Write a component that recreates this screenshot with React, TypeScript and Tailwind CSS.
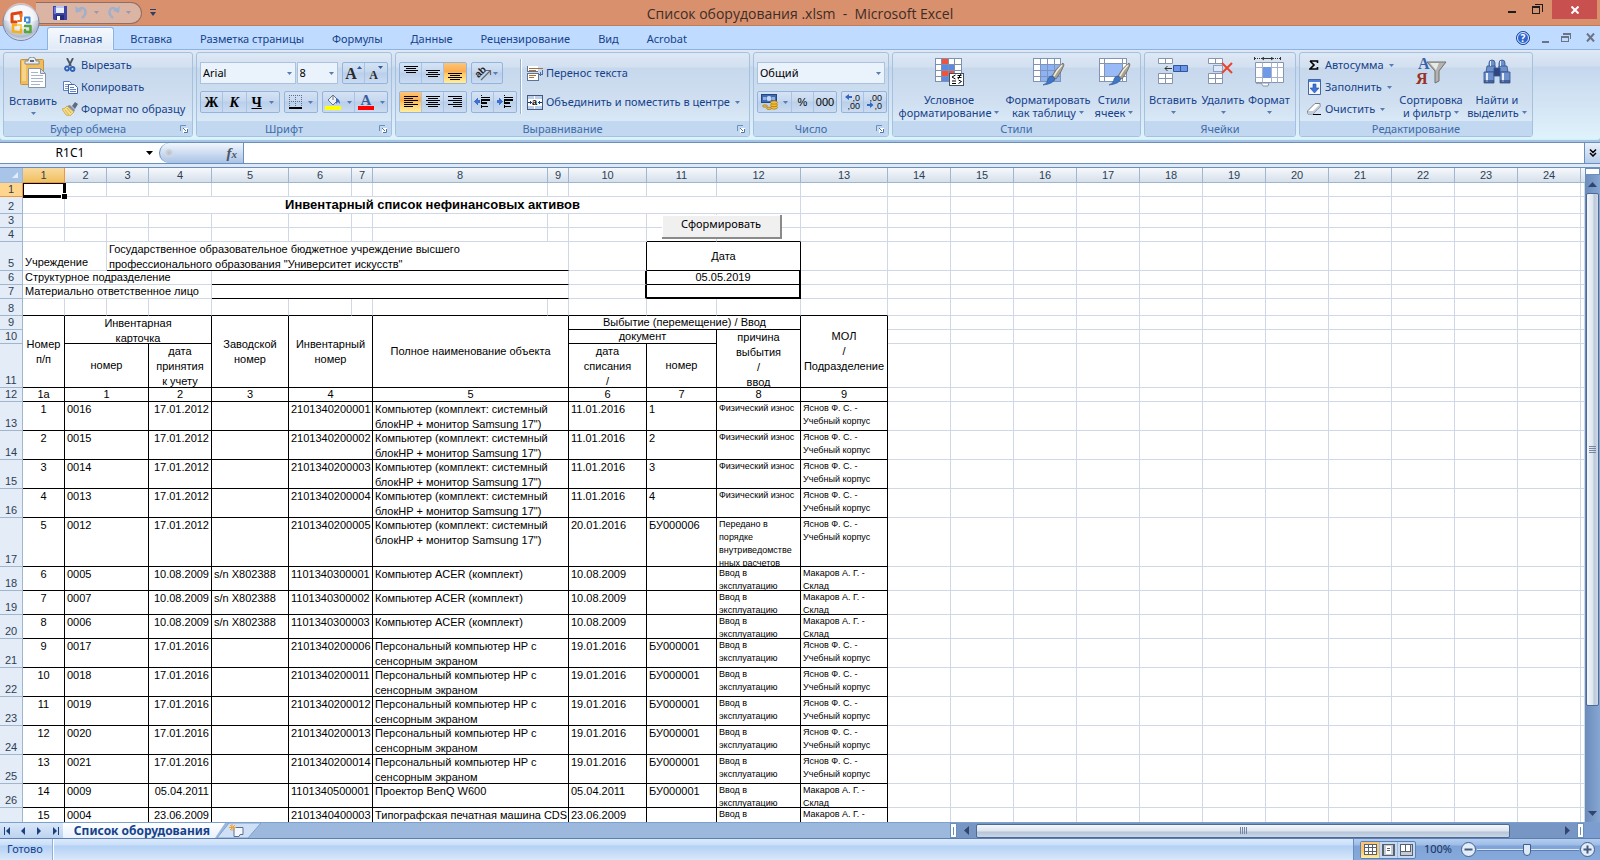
import React from 'react';
import clsx from 'clsx';

interface Asset {
  row: number;
  height: number;
  cells: string[];
}

const MONO_NAME = 'Компьютер (комплект: системный\nблокHP + монитор Samsung 17")';
const TOUCH_NAME = 'Персональный компьютер HP с\nсенсорным экраном';
const STUDY = 'Яснов Ф. С. -\nУчебный корпус';
const STORE = 'Макаров А. Г. -\nСклад';
const LAUNCH = 'Ввод в\nэксплуатацию';
const WEAR = 'Физический износ';
const MOVED = 'Передано в\nпорядке\nвнутриведомстве\nнных расчетов';

const assets: Asset[] = [
  { row: 13, height: 29, cells: ['1', '0016', '17.01.2012', '', '2101340200001', MONO_NAME, '11.01.2016', '1', WEAR, STUDY] },
  { row: 14, height: 29, cells: ['2', '0015', '17.01.2012', '', '2101340200002', MONO_NAME, '11.01.2016', '2', WEAR, STUDY] },
  { row: 15, height: 29, cells: ['3', '0014', '17.01.2012', '', '2101340200003', MONO_NAME, '11.01.2016', '3', WEAR, STUDY] },
  { row: 16, height: 29, cells: ['4', '0013', '17.01.2012', '', '2101340200004', MONO_NAME, '11.01.2016', '4', WEAR, STUDY] },
  { row: 17, height: 49, cells: ['5', '0012', '17.01.2012', '', '2101340200005', MONO_NAME, '20.01.2016', 'БУ000006', MOVED, STUDY] },
  { row: 18, height: 24, cells: ['6', '0005', '10.08.2009', 's/n X802388', '1101340300001', 'Компьютер ACER (комплект)', '10.08.2009', '', LAUNCH, STORE] },
  { row: 19, height: 24, cells: ['7', '0007', '10.08.2009', 's/n X802388', '1101340300002', 'Компьютер ACER (комплект)', '10.08.2009', '', LAUNCH, STORE] },
  { row: 20, height: 24, cells: ['8', '0006', '10.08.2009', 's/n X802388', '1101340300003', 'Компьютер ACER (комплект)', '10.08.2009', '', LAUNCH, STORE] },
  { row: 21, height: 29, cells: ['9', '0017', '17.01.2016', '', '2101340200006', TOUCH_NAME, '19.01.2016', 'БУ000001', LAUNCH, STUDY] },
  { row: 22, height: 29, cells: ['10', '0018', '17.01.2016', '', '2101340200011', TOUCH_NAME, '19.01.2016', 'БУ000001', LAUNCH, STUDY] },
  { row: 23, height: 29, cells: ['11', '0019', '17.01.2016', '', '2101340200012', TOUCH_NAME, '19.01.2016', 'БУ000001', LAUNCH, STUDY] },
  { row: 24, height: 29, cells: ['12', '0020', '17.01.2016', '', '2101340200013', TOUCH_NAME, '19.01.2016', 'БУ000001', LAUNCH, STUDY] },
  { row: 25, height: 29, cells: ['13', '0021', '17.01.2016', '', '2101340200014', TOUCH_NAME, '19.01.2016', 'БУ000001', LAUNCH, STUDY] },
  { row: 26, height: 24, cells: ['14', '0009', '05.04.2011', '', '1101340500001', 'Проектор BenQ W600', '05.04.2011', 'БУ000001', LAUNCH, STORE] },
  { row: 27, height: 34, cells: ['15', '0004', '23.06.2009', '', '2101340400003', 'Типографская печатная машина CDS', '23.06.2009', '', 'Ввод в', 'Макаров А. Г. -'] },
];

const columnWidths = [42, 42, 42, 63, 77, 63, 21, 175, 21, 78, 70, 84, 87, 63, 63, 63, 63, 63, 63, 63, 63, 63, 63, 63];

/* ---------- small shared pieces ---------- */

const Arrow = ({ className = '' }: { className?: string }) => (
  <svg className={clsx('h-[3px] w-[5px] shrink-0', className)} viewBox="0 0 5 3" aria-hidden="true">
    <path d="M0 0h5L2.500 3z" fill="#567db1" />
  </svg>
);

const LauncherIcon = () => (
  <svg width="8" height="8" viewBox="0 0 8 8" fill="none" aria-hidden="true">
    <path d="M0.500 6V0.500H6" stroke="#6d8fbe" />
    <path d="M3 3h5v5H3z" fill="#fff" />
    <path d="M3 3l3 3M7.500 4v3.500H4" stroke="#4f74a8" />
  </svg>
);

const Group: React.FC<{ title: string; width: string; launcher?: boolean; children: React.ReactNode }> = ({
  title,
  width,
  launcher,
  children,
}) => (
  <section
    className={clsx(
      'flex h-[85px] shrink-0 flex-col overflow-hidden rounded-[3px] border border-[#a5c1de] bg-[linear-gradient(#dee8f5,#d3e0f0_14px,#c7d8ed_15px,#d0e0f1_50px,#dae9f6_68px)]',
      width,
    )}
  >
    <div className="flex h-[68px] shrink-0">{children}</div>
    <div className={clsx('flex flex-1 items-center bg-[#c1d8f0]', launcher && 'pr-1')}>
      <h2 className={clsx('flex-1 text-center text-[11px] leading-[14px] text-[#3e6aaa]', launcher && 'pr-2')}>{title}</h2>
      {launcher && (
        <button aria-label={`${title}: параметры`}>
          <LauncherIcon />
        </button>
      )}
    </div>
  </section>
);

const ButtonStrip = ({ children }: { children: React.ReactNode }) => (
  <div className="flex h-[22px] overflow-hidden rounded-[2px] border border-[#93b4dc] bg-[linear-gradient(#d5e3f4,#c6d7ee_9px,#bacfeb_10px,#cbdcf1)]">
    {children}
  </div>
);

const StripButton: React.FC<{ label: string; width?: string; active?: boolean; last?: boolean; children: React.ReactNode }> = ({
  label,
  width = 'w-[22px]',
  active,
  last,
  children,
}) => (
  <button
    aria-label={label}
    className={clsx(
      'flex items-center justify-center gap-[5px]',
      width,
      !last && 'border-r border-[#a9c3e4]',
      active && 'bg-[linear-gradient(#fbc578,#fdab4b_9px,#fdc562_10px,#ffee9c)]',
    )}
  >
    {children}
  </button>
);

const SmallButton: React.FC<{ label: string; icon: React.ReactNode; arrow?: boolean }> = ({ label, icon, arrow }) => (
  <button className="flex h-[22px] items-center gap-[3px] whitespace-nowrap">
    <span className="flex w-4 justify-center">{icon}</span>
    <span>{label}</span>
    {arrow && <Arrow className="ml-[2px]" />}
  </button>
);

const BigButton: React.FC<{ lines: string[]; icon: React.ReactNode; width: string }> = ({ lines, icon, width }) => (
  <button className={clsx('flex shrink-0 flex-col items-center pt-1 leading-[13px] whitespace-nowrap', width)}>
    {icon}
    <span className="mt-[6px]">{lines[0]}</span>
    {lines[1] ? (
      <span className="flex items-center gap-[3px]">
        {lines[1]}
        <Arrow />
      </span>
    ) : (
      <Arrow className="mt-[5px]" />
    )}
  </button>
);

/* ---------- icons ---------- */

const OfficeOrb = () => (
  <svg width="40" height="40" viewBox="0 0 40 40" aria-hidden="true">
    <defs>
      <radialGradient id="orb" cx="50%" cy="35%" r="68%">
        <stop offset="0" stopColor="#ffffff" />
        <stop offset="0.5" stopColor="#e9ecf2" />
        <stop offset="0.8" stopColor="#aebace" />
        <stop offset="1" stopColor="#eef4fb" />
      </radialGradient>
    </defs>
    <circle cx="20" cy="20.500" r="18" fill="url(#orb)" stroke="#7485a4" />
    <path d="M3 18a17 17 0 0 1 34 0q-17 6-34 0z" fill="#fff" opacity="0.45" />
    <g fill="none" strokeLinejoin="round" strokeLinecap="round">
      <path d="M15 20h-4v-8l9-1.500V14" stroke="#dd4410" strokeWidth="3" />
      <path d="M20 12v7h-3" stroke="#f0741f" strokeWidth="2" />
      <path d="M24 17v-1.500h4.500v5H24z" stroke="#3c8ad8" strokeWidth="2" />
      <path d="M15 23h-3v6.500l8 1v-3" stroke="#f7b01c" strokeWidth="2.600" />
      <path d="M17 23h3v3" stroke="#f9cf55" strokeWidth="2" />
      <path d="M24 24h5.500v6H24v-2" stroke="#58a53a" strokeWidth="2.500" />
    </g>
    <path d="M21 18h2v2h2v2h-2v2h-2v-2h-2v-2h2z" fill="#fff" />
  </svg>
);

const SaveIcon = () => (
  <svg width="14" height="14" viewBox="0 0 14 14" aria-hidden="true">
    <path d="M0 0h14v14H1L0 13z" fill="#3b45a8" />
    <path d="M1 1h2v7H1z" fill="#6b78d8" />
    <path d="M3 0h8v7H3z" fill="#e9eefb" />
    <path d="M3 0h8v2H3z" fill="#b9c6ee" />
    <path d="M3 9h8v5H3z" fill="#262d78" />
    <path d="M4 10h3v4H4z" fill="#fff" />
  </svg>
);

const UndoIcon = ({ flip }: { flip?: boolean }) => (
  <svg width="13" height="13" viewBox="0 0 13 13" className={flip ? '-scale-x-100' : ''} aria-hidden="true">
    <path d="M0 0l1 7 6-2z" fill="#9fb0cd" />
    <path d="M3 4q5-4 7 0 2 4-3 8" fill="none" stroke="#9fb0cd" strokeWidth="2.500" />
  </svg>
);

const PasteIcon = () => (
  <svg width="27" height="31" viewBox="0 0 27 31" aria-hidden="true">
    <rect x="0.500" y="2.500" width="23" height="25" rx="1" fill="#eebd5e" stroke="#c9923a" />
    <path d="M2 24V4h4v20z" fill="#f7d489" />
    <path d="M5 7V4h3q0-4 4-4t4 4h3v3z" fill="#e9edf2" stroke="#6e7a8b" strokeWidth="0.800" />
    <path d="M10 3h4v2h-4z" fill="#5d6878" />
    <path d="M8.500 11.500h12l5 5v14h-17z" fill="#fff" stroke="#8793a7" />
    <path d="M20.500 11.500v5h5z" fill="#d5dded" stroke="#8793a7" />
    <path d="M11 15.500h7M11 18.500h12M11 21.500h12M11 24.500h12M11 27.500h9" stroke="#a6b4ca" />
  </svg>
);

const CutIcon = () => (
  <svg width="12" height="14" viewBox="0 0 12 14" fill="none" aria-hidden="true">
    <path d="M3 0l4 8M9 0L5 8" stroke="#4c5566" strokeWidth="1.800" />
    <circle cx="3" cy="10.500" r="2" stroke="#2f62b4" strokeWidth="1.800" />
    <circle cx="8.500" cy="11" r="2" stroke="#2f62b4" strokeWidth="1.800" />
  </svg>
);

const CopyIcon = () => (
  <svg width="15" height="13" viewBox="0 0 15 13" aria-hidden="true">
    <path d="M0.500 0.500h6l2 2v7h-8z" fill="#fff" stroke="#5a7dbd" />
    <path d="M2 3.500h4M2 5.500h4M2 7.500h3" stroke="#7d9ad0" />
    <path d="M5.500 3.500h6l3 3v6h-9z" fill="#fff" stroke="#3f65ae" />
    <path d="M7 6.500h4M7 8.500h6M7 10.500h6" stroke="#5f83c6" />
  </svg>
);

const BrushIcon = () => (
  <svg width="16" height="14" viewBox="0 0 16 14" aria-hidden="true">
    <path d="M10 4l3-4 3 2-3 5z" fill="#5f6b80" />
    <path d="M5 4l3-1 5 5-1 2z" fill="#8492a8" />
    <path d="M5 4l7 6-4 4-4-1-4-6q3 0 5-3z" fill="#f4dc87" stroke="#c09c3b" strokeWidth="0.700" />
    <path d="M3 8l4 5M5 6l4 5" stroke="#cfa94a" strokeWidth="0.800" />
  </svg>
);

const Lines = ({ y, widths, align }: { y: number; widths: number[]; align: 'left' | 'center' | 'right' }) => (
  <svg width="14" height="16" viewBox="0 0 14 16" shapeRendering="crispEdges" aria-hidden="true">
    {widths.map((w, i) => (
      <rect
        key={i}
        x={align === 'left' ? 0 : align === 'center' ? (14 - w) / 2 : 14 - w}
        y={y + i * 2}
        width={w}
        height="1"
        fill="#000"
      />
    ))}
  </svg>
);

const IndentIcon = ({ flip }: { flip?: boolean }) => (
  <svg width="17" height="14" viewBox="0 0 17 14" shapeRendering="crispEdges" aria-hidden="true">
    <path d={flip ? 'M0 5h2V3l4 3.500L2 10V8H0z' : 'M6 5H4V3L0 6.500 4 10V8h2z'} fill="#3f6fd0" />
    <path d="M7 2h9v1H7zM7 4h9v2H7zM7 7h6v2H7zM7 11h7v1H7z" fill="#000" />
    <path d="M7.500 0v14" stroke="#000" strokeDasharray="1 1" />
  </svg>
);

const OrientationIcon = () => (
  <svg width="16" height="15" viewBox="0 0 16 15" className="overflow-visible" aria-hidden="true">
    <g transform="rotate(-45 6 6)">
      <text x="-1" y="8" fontSize="10" fontWeight="bold" fontFamily="Liberation Sans, sans-serif" fill="#222">ab</text>
    </g>
    <path d="M5 14l9-9M14.500 9V4.500H10" fill="none" stroke="#666" strokeWidth="1.200" />
  </svg>
);

const WrapIcon = () => (
  <svg width="16" height="15" viewBox="0 0 16 15" shapeRendering="crispEdges" aria-hidden="true">
    <path d="M0 0h11v5H0zM0 8h11v6H0z" fill="#fff" />
    <path d="M0.500 0v5.500H11M0.500 7.500v7h11v-7z" fill="none" stroke="#5e7292" />
    <path d="M2 2.500h14M2 4.500h7M2 9.500h7M2 11.500h5" stroke="#a8703a" />
    <path d="M15 4v4h-3M13 6v4" stroke="#4a6ca8" fill="none" />
  </svg>
);

const MergeIcon = () => (
  <svg width="16" height="15" viewBox="0 0 16 15" shapeRendering="crispEdges" aria-hidden="true">
    <rect x="0.500" y="0.500" width="15" height="14" fill="#bcd0ee" stroke="#44597c" />
    <path d="M1 4.500h14M1 10.500h14M7.500 1v3M7.500 11v3" stroke="#fff" />
    <path d="M1 5h14v5H1z" fill="#fff" />
    <path d="M1 7h4v1H1zM3 6h1v3H3zM11 7h4v1h-4zM12 6h1v3h-1z" fill="#1d3b77" />
    <text x="5" y="10" fontSize="9" fontWeight="bold" fontFamily="Liberation Sans, sans-serif">a</text>
  </svg>
);

const BorderIcon = () => (
  <svg width="14" height="14" viewBox="0 0 14 14" shapeRendering="crispEdges" aria-hidden="true">
    <path d="M0 0.500h13M0 6.500h13M0.500 0v12M6.500 0v12M12.500 0v12" stroke="#5c6f8c" strokeDasharray="1 1" />
    <path d="M0 13h13" stroke="#000" strokeWidth="2" />
  </svg>
);

const FillIcon = () => (
  <svg width="17" height="16" viewBox="0 0 17 16" aria-hidden="true">
    <path d="M3 6l5-5 5 5-5 5z" fill="#eef3fa" stroke="#66748b" />
    <path d="M8 1v5" stroke="#66748b" />
    <path d="M11 4q4 1 4 6l-2-2-2 2z" fill="#3f6db9" />
    <path d="M0 12h16v4H0z" fill="#ffff00" />
  </svg>
);

const FontColorIcon = () => (
  <svg width="17" height="16" viewBox="0 0 17 16" className="overflow-visible" aria-hidden="true">
    <text x="8" y="11" textAnchor="middle" fontSize="15" fontWeight="bold" fontFamily="Liberation Serif, serif" fill="#3c5c9a">A</text>
    <path d="M0 12h16v4H0z" fill="#ff0000" />
  </svg>
);

const CurrencyIcon = () => (
  <svg width="17" height="16" viewBox="0 0 17 16" aria-hidden="true">
    <rect x="0.500" y="0.500" width="15" height="8" fill="#3e6cb8" stroke="#27467f" />
    <circle cx="8" cy="4.500" r="2.500" fill="#c7d8f2" />
    <path d="M2 3h3v3H2zM11 3h3v3h-3z" fill="#8fafe0" />
    <g fill="#f4bd33" stroke="#9c6b0c" strokeWidth="0.600">
      <ellipse cx="13" cy="13.500" rx="3.500" ry="1.700" />
      <ellipse cx="13" cy="11" rx="3.500" ry="1.700" />
      <ellipse cx="13" cy="8.500" rx="3.500" ry="1.700" />
      <ellipse cx="4" cy="12" rx="2.500" ry="1.200" />
      <ellipse cx="8" cy="14.300" rx="2.500" ry="1.200" />
    </g>
  </svg>
);

const DecimalIcon = ({ less }: { less?: boolean }) => (
  <svg width="16" height="16" viewBox="0 0 16 16" fontFamily="Liberation Sans, sans-serif" fontSize="9" fill="#111" className="overflow-visible" aria-hidden="true">
    <text x="15" y="7" textAnchor="end">{less ? ',00' : ',0'}</text>
    <text x="15" y="15" textAnchor="end">{less ? ',0' : ',00'}</text>
    <path d={less ? 'M0 10h3V8l3.500 3L3 14v-2H0z' : 'M7 2H4V0L0 3l4 3V4h3z'} fill="#3567c0" />
  </svg>
);

const CondFormatIcon = () => (
  <svg width="31" height="30" viewBox="0 0 31 30" shapeRendering="crispEdges" aria-hidden="true">
    <path d="M1 1h27v24H1z" fill="#fff" />
    <path d="M8 1h6v6H8zM8 13h12v6H8z" fill="#f0523c" />
    <path d="M8 7h12v6H8zM8 19h6v6H8z" fill="#5b8ae6" />
    <path d="M1.500 1v24M7.500 1v24M14.500 1v24M20.500 1v24M27.500 1v24M1 1.500h27M1 7.500h27M1 13.500h27M1 19.500h27M1 24.500h27" stroke="#7f8fae" />
    <path d="M15.500 16.500h14v12h-14z" fill="#fff" stroke="#445068" />
    <g stroke="#000" fill="none" shapeRendering="auto">
      <path d="M21.500 18l-3.500 2 3.500 2M18 24h4M18 26.500h4M23.500 18.500h4M23.500 20.500h4M27 17l-3 5M24.500 23l3 1.500-3 2" />
    </g>
  </svg>
);

const Brush = () => (
  <>
    <path d="M31 6q-7 5-11 13l4 3q6-8 8-14z" fill="#a9a393" stroke="#5f5b50" strokeWidth="0.700" />
    <path d="M30 8q-5 5-8 11" stroke="#f2efe6" strokeWidth="1.500" fill="none" />
    <path d="M20 19l3 3q-2 5-12 6 5-2 5-6 1-3 4-3z" fill="#3f77c8" stroke="#27508f" strokeWidth="0.600" />
  </>
);

const TableFormatIcon = () => (
  <svg width="33" height="30" viewBox="0 0 33 30" aria-hidden="true">
    <path d="M1 1h28v24H1z" fill="#fff" />
    <path d="M8 7h21v18H8z" fill="#8db3f5" />
    <path d="M1.500 1v24M8.500 1v24M15.500 1v24M22.500 1v24M28.500 1v24M1 1.500h28M1 7.500h28M1 13.500h28M1 19.500h28M1 24.500h28" stroke="#7f93b8" />
    <Brush />
  </svg>
);

const CellStylesIcon = () => (
  <svg width="33" height="30" viewBox="0 0 33 30" aria-hidden="true">
    <path d="M1 1h28v24H1z" fill="#fff" />
    <path d="M6.500 6.500h18v13h-18z" fill="#98bbf8" />
    <path d="M1.500 1v24M6.500 1v24M24.500 1v24M28.500 1v24M1 1.500h28M1 6.500h28M1 19.500h28M1 24.500h28" stroke="#8394b2" fill="none" />
    <Brush />
  </svg>
);

const InsertCellsIcon = ({ remove }: { remove?: boolean }) => (
  <svg width="31" height="30" viewBox="0 0 31 30" aria-hidden="true">
    <g fill="#fff" stroke="#8794ae">
      <path d="M0.500 1.500h14v5h-14zM7.500 1.500v5M0.500 16.500h14v10h-14zM7.500 16.500v10M0.500 21.500h14" />
    </g>
    {remove ? (
      <>
        <path d="M5.500 8.500h9v6h-9z" fill="#dfe9f8" stroke="#3c5f9c" strokeDasharray="1 1" />
        <path d="M14 6l10 10M24 6L14 16" stroke="#e8452c" strokeWidth="2" />
      </>
    ) : (
      <>
        <path d="M15.500 8.500h14v6h-14z" fill="#6c97e8" stroke="#2f559d" />
        <path d="M22.500 8.500v6" stroke="#2f559d" />
        <path d="M14 11.500H7M9.500 9L7 11.500 9.500 14" stroke="#333" fill="none" />
      </>
    )}
  </svg>
);

const FormatCellsIcon = () => (
  <svg width="31" height="30" viewBox="0 0 31 30" aria-hidden="true">
    <path d="M1 1.500h25" stroke="#333" strokeDasharray="1 1" />
    <path d="M8 1.500h11M10 0L8 1.500 10 3M17 0l2 1.500L17 3M0.500 0v3M26.500 0v3" stroke="#333" fill="none" />
    <path d="M1.500 5.500h28v20h-28z" fill="#fff" stroke="#8794ae" />
    <path d="M8.500 5.500v20M17.500 5.500v20M23.500 5.500v20M1.500 10.500h28M1.500 20.500h28" stroke="#a8b3c8" />
    <path d="M9 10h8v11H9z" fill="#6f9ae8" />
    <path d="M2 26h5l2 3h5l1-3z" fill="#fff" stroke="#8794ae" />
  </svg>
);

const SortFilterIcon = () => (
  <svg width="31" height="30" viewBox="0 0 31 30" fontFamily="Liberation Serif, serif" fontWeight="bold" fontSize="16" className="overflow-visible" aria-hidden="true">
    <path d="M11 5h19l-7 9v10l-4 2V14z" fill="#b3b3b0" stroke="#70706d" />
    <path d="M14 6h9l-3 7z" fill="#e9e9e6" />
    <text x="2" y="12" fill="#3a62ae">А</text>
    <text x="0" y="27" fill="#9a3226">Я</text>
  </svg>
);

const BinocularsIcon = () => (
  <svg width="28" height="30" viewBox="0 0 28 30" aria-hidden="true">
    <g fill="#6d8fca" stroke="#34528e" strokeWidth="0.800">
      <path d="M6 6q0-3 3-3t3 3v6H6zM16 6q0-3 3-3t3 3v6h-6z" />
      <path d="M4 9h8v6H3zM16 9h8l1 6h-9z" />
      <path d="M1 15h10v11H1zM17 15h10v11H17z" />
      <path d="M11 11h6v8h-6z" fill="#2d4680" />
    </g>
    <path d="M3 16h2v9H3zM19 16h2v9h-2zM7 4h1v5H7zM17 4h1v5h-1z" fill="#e3edfb" />
    <path d="M1 23h10v3H1zM17 23h10v3H17z" fill="#2b4379" opacity="0.6" />
  </svg>
);

const SumIcon = () => (
  <svg width="10" height="10" viewBox="0 0 10 10" aria-hidden="true">
    <path d="M1 1h7.500v2M1 1l4 4-4 4h7.500V7" fill="none" stroke="#000" strokeWidth="1.600" />
  </svg>
);

const FillDownIcon = () => (
  <svg width="13" height="16" viewBox="0 0 13 16" aria-hidden="true">
    <path d="M0.500 0.500h12v15h-12z" fill="#f3f7fd" stroke="#45659c" />
    <path d="M1 1h11v2H1z" fill="#4c83dc" />
    <path d="M5 5h3v4h3l-4.500 5L2 9h3z" fill="#3c75d8" stroke="#234f9e" strokeWidth="0.600" />
  </svg>
);

const EraserIcon = () => (
  <svg width="14" height="12" viewBox="0 0 14 12" aria-hidden="true">
    <path d="M0.500 8L8 0.500h5V4L6 11H1z" fill="#fff" stroke="#74808f" />
    <path d="M1 8h5l7-7v3L6 11H1z" fill="#c3cad4" />
    <path d="M6 11.500h8" stroke="#000" />
  </svg>
);

const Digits = ({ children }: { children: string }) => (
  <span className="font-['Liberation_Sans',Arial,sans-serif] text-[11px] text-black">{children}</span>
);

/* ---------- window frame ---------- */

const TitleBar = () => (
  <header className="flex h-[26px] shrink-0 items-stretch border-b border-[#bf7c5b] bg-[#d8906d]">
    <div className="flex flex-1 items-center">
      <div className="ml-9 flex h-[22px] w-[106px] items-center rounded-r-full border border-l-0 border-[#8d6f68] bg-[#dbb4a3] pl-[17px]">
        <button aria-label="Сохранить"><SaveIcon /></button>
        <button aria-label="Отменить" className="ml-2 flex items-center gap-[6px]"><UndoIcon /><Arrow className="opacity-50" /></button>
        <button aria-label="Вернуть" className="ml-2 flex items-center gap-[6px]"><UndoIcon flip /><Arrow className="opacity-50" /></button>
      </div>
      <button aria-label="Настройка панели быстрого доступа" className="ml-2">
        <svg width="6" height="7" viewBox="0 0 6 7"><path d="M0 0h6v1H0zM0 3h6L3 7z" fill="#2b3f6b" /></svg>
      </button>
    </div>
    <h1 className="font-['Open_Sans','Noto_Sans',sans-serif] text-[14px] leading-[27px] text-[#3c2d28]">
      Список оборудования .xlsm&nbsp; -&nbsp; Microsoft Excel
    </h1>
    <div className="flex flex-1 items-start justify-end gap-[16px]">
      <button aria-label="Свернуть" className="pt-[11px]">
        <svg width="8" height="2" viewBox="0 0 8 2"><path d="M0 0h8v2H0z" fill="#1d1d1d" /></svg>
      </button>
      <button aria-label="Восстановить" className="pt-1">
        <svg width="11" height="10" viewBox="0 0 11 10" shapeRendering="crispEdges">
          <path d="M3 0.500h7.500V8M0.500 3v6.500h7V3" fill="none" stroke="#1d1d1d" />
          <path d="M0 2h8v2H0z" fill="#1d1d1d" />
        </svg>
      </button>
      <button aria-label="Закрыть" className="mr-[3px] -ml-[7px] flex h-[19px] w-[45px] items-center justify-center bg-[#c8504f]">
        <svg width="8" height="8" viewBox="0 0 8 8"><path d="M0.500 0.500l7 7M7.500 0.500l-7 7" stroke="#fff" strokeWidth="2" /></svg>
      </button>
    </div>
  </header>
);

const tabs = ['Главная', 'Вставка', 'Разметка страницы', 'Формулы', 'Данные', 'Рецензирование', 'Вид', 'Acrobat'];

const TabBar = () => (
  <nav className="flex h-6 shrink-0 items-end border-b border-[#8db2e3] bg-[#bfdbff] pl-[47px]">
    {tabs.map((tab, i) => (
      <button
        key={tab}
        className={clsx(
          'text-[11px] leading-[22px] whitespace-nowrap',
          i === 0
            ? 'mr-[2px] -mb-px h-[23px] rounded-t-[3px] border border-b-0 border-[#8db2e3] bg-[linear-gradient(#f5f9fe,#dfeaf7)] px-[11px] shadow-[inset_0_0_2px_#fff]'
            : 'h-[22px] px-[14px] pt-px',
        )}
      >
        {tab}
      </button>
    ))}
    <div className="flex flex-1 items-center justify-end gap-[12px] self-center pr-[5px]">
      <button aria-label="Справка">
        <svg width="14" height="14" viewBox="0 0 14 14">
          <circle cx="7" cy="7" r="6.500" fill="#2f66d0" stroke="#1f4496" />
          <circle cx="7" cy="7" r="5.500" fill="none" stroke="#dbe8ff" />
          <text x="7" y="11" fontSize="10" fontWeight="bold" textAnchor="middle" fill="#fff">?</text>
        </svg>
      </button>
      <button aria-label="Свернуть книгу" className="pt-2">
        <svg width="7" height="2" viewBox="0 0 7 2"><path d="M0 0h7v2H0z" fill="#6a7485" /></svg>
      </button>
      <button aria-label="Восстановить книгу">
        <svg width="10" height="9" viewBox="0 0 10 9" shapeRendering="crispEdges">
          <path d="M2 1h7v5M0.500 3v5.500h7V3" fill="none" stroke="#6a7485" />
          <path d="M2 0h8v2H2zM0 3h8v2H0z" fill="#6a7485" />
        </svg>
      </button>
      <button aria-label="Закрыть книгу" className="ml-[3px]">
        <svg width="9" height="9" viewBox="0 0 9 9"><path d="M1 0.500l7 8M8 0.500l-7 8" stroke="#6a7485" strokeWidth="2" /></svg>
      </button>
    </div>
  </nav>
);

const RibbonSelect: React.FC<{ label: string; value: string; width: string }> = ({ label, value, width }) => (
  <label className={clsx('relative flex h-[22px] items-center', width)}>
    <select
      aria-label={label}
      defaultValue={value}
      className="h-full w-full appearance-none border border-[#abc1de] bg-[#eaf2fb] pl-[2px] text-[11px] text-black"
    >
      <option>{value}</option>
    </select>
    <Arrow className="pointer-events-none absolute right-1" />
  </label>
);

const Ribbon = () => (
  <div className="shrink-0 border-b border-[#6a8fbd] bg-[#a9c3e5] pb-[2px]">
    <div className="flex h-[90px] gap-[3px] overflow-hidden rounded-b-[3px] border-b border-[#c8f4f8] bg-[linear-gradient(#dfe9f5,#d0def0_16px,#c5d7ed_17px,#e0f2fb)] pt-[2px] pl-[3px] text-[11px]">
      <Group title="Буфер обмена" width="w-[190px]" launcher>
        <BigButton lines={['Вставить']} icon={<PasteIcon />} width="w-[58px]" />
        <div className="flex flex-col items-start pt-[1px]">
          <SmallButton label="Вырезать" icon={<CutIcon />} />
          <SmallButton label="Копировать" icon={<CopyIcon />} />
          <SmallButton label="Формат по образцу" icon={<BrushIcon />} />
        </div>
      </Group>

      <Group title="Шрифт" width="w-[196px]" launcher>
        <div className="flex w-full flex-col gap-[7px] px-[3px] pt-[9px]">
          <div className="flex gap-[1px]">
            <RibbonSelect label="Шрифт" value="Arial" width="w-[97px]" />
            <RibbonSelect label="Размер шрифта" value="8" width="w-[42px]" />
            <div className="ml-[3px] font-['Liberation_Serif',serif] font-bold text-[#2a2a2a]">
              <ButtonStrip>
                <StripButton label="Увеличить размер шрифта">
                  <span className="pt-[2px] text-[16px] leading-none">A</span>
                  <svg width="5" height="3" viewBox="0 0 5 3" className="mb-3 -ml-[5px]"><path d="M0 3h5L2.500 0z" fill="#34589a" /></svg>
                </StripButton>
                <StripButton label="Уменьшить размер шрифта" last>
                  <span className="pt-1 text-[12px] leading-none">A</span>
                  <svg width="5" height="3" viewBox="0 0 5 3" className="mb-3 -ml-[5px]"><path d="M0 0h5L2.500 3z" fill="#34589a" /></svg>
                </StripButton>
              </ButtonStrip>
            </div>
          </div>
          <div className="flex gap-1 font-['Liberation_Serif',serif] text-[14px] font-bold text-black">
            <ButtonStrip>
              <StripButton label="Полужирный">Ж</StripButton>
              <StripButton label="Курсив" width="w-[24px]"><i>К</i></StripButton>
              <StripButton label="Подчеркнутый" width="w-[32px]" last><u>Ч</u><Arrow className="ml-[2px]" /></StripButton>
            </ButtonStrip>
            <ButtonStrip>
              <StripButton label="Границы" width="w-[33px]" last><BorderIcon /><Arrow /></StripButton>
            </ButtonStrip>
            <ButtonStrip>
              <StripButton label="Цвет заливки" width="w-[32px]"><FillIcon /><Arrow /></StripButton>
              <StripButton label="Цвет текста" width="w-[32px]" last><FontColorIcon /><Arrow /></StripButton>
            </ButtonStrip>
          </div>
        </div>
      </Group>

      <Group title="Выравнивание" width="w-[355px]" launcher>
        <div className="flex flex-col gap-[7px] pt-[9px] pl-[3px]">
          <div className="flex gap-1">
            <ButtonStrip>
              <StripButton label="По верхнему краю"><Lines y={1} widths={[14, 10, 14, 10]} align="center" /></StripButton>
              <StripButton label="Выровнять по середине"><Lines y={5} widths={[14, 10, 14, 10]} align="center" /></StripButton>
              <StripButton label="По нижнему краю" active last><Lines y={8} widths={[14, 10, 14, 10]} align="center" /></StripButton>
            </ButtonStrip>
            <ButtonStrip>
              <StripButton label="Ориентация" width="w-[30px]" last><OrientationIcon /><Arrow className="-ml-1" /></StripButton>
            </ButtonStrip>
          </div>
          <div className="flex gap-1">
            <ButtonStrip>
              <StripButton label="По левому краю" active><Lines y={2} widths={[14, 9, 14, 9, 14, 9]} align="left" /></StripButton>
              <StripButton label="По центру"><Lines y={2} widths={[14, 10, 14, 10, 14, 10]} align="center" /></StripButton>
              <StripButton label="По правому краю" last><Lines y={2} widths={[14, 9, 14, 9, 14, 9]} align="right" /></StripButton>
            </ButtonStrip>
            <ButtonStrip>
              <StripButton label="Уменьшить отступ"><IndentIcon /></StripButton>
              <StripButton label="Увеличить отступ" last><IndentIcon flip /></StripButton>
            </ButtonStrip>
          </div>
        </div>
        <div className="mt-[6px] ml-[3px] h-[55px] w-[2px] border-l border-[#93b0d6] bg-white" />
        <div className="flex flex-col items-start gap-[7px] pt-[9px] pl-[5px]">
          <SmallButton label="Перенос текста" icon={<WrapIcon />} />
          <SmallButton label="Объединить и поместить в центре" icon={<MergeIcon />} arrow />
        </div>
      </Group>

      <Group title="Число" width="w-[136px]" launcher>
        <div className="flex flex-col gap-[7px] pt-[9px] pl-[3px]">
          <RibbonSelect label="Числовой формат" value="Общий" width="w-[128px]" />
          <div className="flex gap-1">
            <ButtonStrip>
              <StripButton label="Финансовый формат" width="w-[34px]"><CurrencyIcon /><Arrow /></StripButton>
              <StripButton label="Процентный формат"><Digits>%</Digits></StripButton>
              <StripButton label="Формат с разделителями" last><Digits>000</Digits></StripButton>
            </ButtonStrip>
            <ButtonStrip>
              <StripButton label="Увеличить разрядность"><DecimalIcon /></StripButton>
              <StripButton label="Уменьшить разрядность" last><DecimalIcon less /></StripButton>
            </ButtonStrip>
          </div>
        </div>
      </Group>

      <Group title="Стили" width="w-[249px]">
        <BigButton lines={['Условное', 'форматирование']} icon={<CondFormatIcon />} width="w-[112px]" />
        <BigButton lines={['Форматировать', 'как таблицу']} icon={<TableFormatIcon />} width="w-[86px]" />
        <BigButton lines={['Стили', 'ячеек']} icon={<CellStylesIcon />} width="w-[46px]" />
      </Group>

      <Group title="Ячейки" width="w-[152px]">
        <BigButton lines={['Вставить']} icon={<InsertCellsIcon />} width="w-[56px]" />
        <BigButton lines={['Удалить']} icon={<InsertCellsIcon remove />} width="w-[44px]" />
        <BigButton lines={['Формат']} icon={<FormatCellsIcon />} width="w-[48px]" />
      </Group>

      <Group title="Редактирование" width="w-[234px]">
        <div className="flex w-[96px] flex-col items-start pt-[1px] pl-[6px]">
          <SmallButton label="Автосумма" icon={<SumIcon />} arrow />
          <SmallButton label="Заполнить" icon={<FillDownIcon />} arrow />
          <SmallButton label="Очистить" icon={<EraserIcon />} arrow />
        </div>
        <BigButton lines={['Сортировка', 'и фильтр']} icon={<SortFilterIcon />} width="w-[70px]" />
        <BigButton lines={['Найти и', 'выделить']} icon={<BinocularsIcon />} width="w-[62px]" />
      </Group>
    </div>
  </div>
);

const FormulaBar = () => (
  <div className="flex h-[25px] shrink-0 items-start border-b border-[#6a8fbd] bg-[#dfe9f6]">
    <div className="flex h-[21px] w-full border-b border-[#6a8fbd] bg-white">
      <input aria-label="Имя" defaultValue="R1C1" className="w-[140px] text-center text-[12px] text-black outline-none" />
      <button aria-label="Список имен" className="w-[19px] pl-[6px]">
        <svg width="7" height="4" viewBox="0 0 7 4"><path d="M0 0h7L3.500 4z" /></svg>
      </button>
      <div className="flex w-[85px] items-center justify-between rounded-l-full border-r border-l border-[#6a8fbd] bg-[linear-gradient(#f1f6fc,#a9c3e6)] pr-[6px] pl-[5px]">
        <span className="size-2 rounded-full bg-[radial-gradient(#b7bfcb,#dfe5ee)]" />
        <button aria-label="Вставить функцию" className="font-['Liberation_Serif',serif] text-[15px] leading-none font-bold text-[#4c5563] italic">
          f<span className="text-[11px]">x</span>
        </button>
      </div>
      <input aria-label="Строка формул" className="min-w-0 flex-1 text-black outline-none" />
      <button aria-label="Развернуть строку формул" className="flex w-4 items-center justify-center border-l border-[#6a8fbd] bg-[linear-gradient(#e8f0fa,#b7cdea)]">
        <svg width="8" height="8" viewBox="0 0 8 8" fill="none" stroke="#000" strokeWidth="1.500"><path d="M1 0.500l3 3 3-3M1 4l3 3 3-3" /></svg>
      </button>
    </div>
  </div>
);

/* ---------- worksheet ---------- */

interface CellProps {
  h: number;
  text?: string;
  col?: number;
  row?: number;
  edges?: string;
  place?: string;
  small?: boolean;
  children?: React.ReactNode;
}

const Cell: React.FC<CellProps> = ({ h, text, col, row, edges, place = 'items-center justify-center text-center', small, children }) => (
  <td colSpan={col} rowSpan={row} className={clsx('relative border-r border-b border-[#d0d7e5] p-0', edges)}>
    {text && (
      <div
        className={clsx('flex overflow-hidden px-[2px] whitespace-pre', small ? 'text-[9px] leading-[13px]' : 'text-[11px] leading-[15px]', place)}
        style={{ height: h - 1 }}
      >
        {text}
      </div>
    )}
    {children}
  </td>
);

const Blank = ({ count, edges }: { count: number; edges?: string }) => (
  <>
    {Array.from({ length: count }, (_, i) => (
      <td key={i} className={clsx('border-r border-b border-[#d0d7e5] p-0', edges)} />
    ))}
  </>
);

// Every sheet row: its number on the left, gridded empty columns on the right.
const SheetRow: React.FC<{ n: number; h: number; children: React.ReactNode }> = ({ n, h, children }) => (
  <tr style={{ height: h }}>
    <th
      scope="row"
      className={clsx(
        'border-r border-b p-0 text-[11px] font-normal text-[#2c3f55]',
        n === 1 ? 'border-[#f29536] bg-[#ffd58d]' : 'border-[#9eb6ce] bg-[#e4ecf7]',
      )}
    >
      <div className="flex items-end justify-center overflow-hidden leading-[14px]" style={{ height: h - 1 }}>
        {n < 27 && n}
      </div>
    </th>
    {children}
    <Blank count={12} />
  </tr>
);

const BOX = 'border-r-black border-b-black';
const LEFT_TOP = 'items-start justify-start';
const TOP_CENTER = 'items-start justify-center text-center';
const places = [
  TOP_CENTER, LEFT_TOP, 'items-start justify-end', LEFT_TOP, LEFT_TOP, LEFT_TOP, LEFT_TOP, LEFT_TOP, LEFT_TOP, LEFT_TOP,
];
const spans = [1, 2, 1, 1, 2, 2, 1, 1, 1, 1];

const Sheet = () => (
  <table className="w-full table-fixed border-separate border-spacing-0 font-['Liberation_Sans',Arial,sans-serif] text-[11px] text-black">
    <colgroup>
      <col className="w-[23px]" />
      {columnWidths.map((w, i) => (
        <col key={i} style={{ width: w }} />
      ))}
      <col />
    </colgroup>
    <thead>
      <tr className="h-[15px] text-[11px] leading-[14px] text-[#2c3f55]">
        <th className="border-r border-b border-[#9eb6ce] bg-[#a9c4e9] p-0">
          <svg width="6" height="6" viewBox="0 0 6 6" className="ml-3"><path d="M6 0v6H0z" fill="#e4ecf7" /></svg>
        </th>
        {columnWidths.map((_, i) => (
          <th
            key={i}
            scope="col"
            className={clsx(
              'border-r border-b p-0 font-normal',
              i === 0 ? 'border-[#f29536] bg-[linear-gradient(#f9d99f,#f1c15f)]' : 'border-[#9eb6ce] bg-[linear-gradient(#f6f9fc,#d6dfeb)]',
            )}
          >
            {i + 1}
          </th>
        ))}
        <th className="border-b border-[#9eb6ce] bg-[linear-gradient(#f6f9fc,#d6dfeb)] p-0" />
      </tr>
    </thead>
    <tbody>
      <SheetRow n={1} h={14}>
        <Cell h={14}>
          <div className="absolute top-0 -right-[2px] -bottom-[2px] left-0 z-10 border-t border-r-[3px] border-b-[3px] border-l border-black">
            <span className="absolute -right-[4px] -bottom-[4px] size-[6px] border-t border-l border-white bg-black" />
          </div>
        </Cell>
        <Blank count={12} />
      </SheetRow>
      <SheetRow n={2} h={17}>
        <Blank count={1} />
        <td colSpan={11} className="border-r border-b border-[#d0d7e5] p-0 text-center text-[13px] leading-[16px] font-bold">
          Инвентарный список нефинансовых активов
        </td>
        <Blank count={1} />
      </SheetRow>
      <SheetRow n={3} h={14}>
        <Blank count={10} />
        <Cell h={14}>
          <button className="absolute top-[1px] left-[15px] z-10 h-6 w-[120px] border-r-2 border-b-2 border-[#8a8a8a] bg-[#f0f0f0] pb-1 font-['Noto_Sans',sans-serif] text-[11px] leading-[14px] shadow-[inset_1px_1px_0_#fff]">
            Сформировать
          </button>
        </Cell>
        <Blank count={2} />
      </SheetRow>
      <SheetRow n={4} h={14}>
        <Blank count={10} />
        <Blank count={2} edges="border-b-black" />
        <Blank count={1} />
      </SheetRow>
      <SheetRow n={5} h={29}>
        <Cell h={29} col={2} text="Учреждение" place="items-end justify-start" />
        <Cell
          h={29}
          col={7}
          text={'Государственное образовательное бюджетное учреждение высшего\nпрофессионального образования "Университет искусств"'}
          edges="border-b-black"
          place={LEFT_TOP}
        />
        <Blank count={1} edges="border-r-black" />
        <Cell h={29} col={2} text="Дата" edges={BOX} />
        <Blank count={1} />
      </SheetRow>
      <SheetRow n={6} h={14}>
        <Cell h={14} col={4} text="Структурное подразделение" place="items-center justify-start" />
        <Cell h={14} col={5} edges="border-b-black" />
        <Blank count={1} edges="border-r-2! border-r-black" />
        <Cell h={14} col={2} text="05.05.2019" edges="border-r-2! border-r-black border-b-black" />
        <Blank count={1} />
      </SheetRow>
      <SheetRow n={7} h={14}>
        <Cell h={14} col={4} text="Материально ответственное лицо" place="items-center justify-start" />
        <Cell h={14} col={5} edges="border-b-black" />
        <Blank count={1} edges="border-r-2! border-r-black" />
        <Cell h={14} col={2} edges="border-r-2! border-b-2! border-r-black border-b-black" />
        <Blank count={1} />
      </SheetRow>
      <SheetRow n={8} h={17}>
        <Blank count={13} edges="border-b-black" />
      </SheetRow>
      <SheetRow n={9} h={14}>
        <Cell h={72} row={3} text={'Номер\nп/п'} edges={BOX} />
        <Cell h={28} col={3} row={2} text={'Инвентарная\nкарточка'} edges={BOX} place={TOP_CENTER} />
        <Cell h={72} row={3} text={'Заводской\nномер'} edges={BOX} />
        <Cell h={72} col={2} row={3} text={'Инвентарный\nномер'} edges={BOX} />
        <Cell h={72} col={2} row={3} text="Полное наименование объекта" edges={BOX} />
        <Cell h={14} col={3} text="Выбытие (перемещение) / Ввод" edges={BOX} />
        <Cell h={72} row={3} text={'МОЛ\n/\nПодразделение'} edges={BOX} />
      </SheetRow>
      <SheetRow n={10} h={14}>
        <Cell h={14} col={2} text="документ" edges={BOX} />
        <Cell h={58} row={2} text={'причина\nвыбытия\n/\nввод'} edges={BOX} place={TOP_CENTER} />
      </SheetRow>
      <SheetRow n={11} h={44}>
        <Cell h={44} col={2} text="номер" edges={BOX} />
        <Cell h={44} text={'дата\nпринятия\nк учету'} edges={BOX} place={TOP_CENTER} />
        <Cell h={44} text={'дата\nсписания\n/'} edges={BOX} place={TOP_CENTER} />
        <Cell h={44} text="номер" edges={BOX} />
      </SheetRow>
      <SheetRow n={12} h={14}>
        {['1а', '1', '2', '3', '4', '5', '6', '7', '8', '9'].map((text, i) => (
          <Cell key={i} h={14} col={spans[i]} text={text} edges={BOX} />
        ))}
      </SheetRow>
      {assets.map((asset) => (
        <SheetRow key={asset.row} n={asset.row} h={asset.height}>
          {asset.cells.map((text, i) => (
            <Cell key={i} h={asset.height} col={spans[i]} text={text} edges={BOX} place={places[i]} small={i > 7} />
          ))}
        </SheetRow>
      ))}
    </tbody>
  </table>
);

const VerticalScroll = () => (
  <div className="flex w-[15px] shrink-0 flex-col items-center bg-[linear-gradient(90deg,#6b8cbb,#86a6d3)]">
    <div className="h-[7px] w-full border border-[#6a8fbd] bg-white" />
    <button aria-label="Вверх" className="flex h-[18px] w-full items-center justify-center">
      <svg width="9" height="5" viewBox="0 0 9 5"><path d="M0 5h9L4.500 0z" fill="#31466f" /></svg>
    </button>
    <div className="flex w-[13px] flex-[5.2] flex-col items-center justify-center gap-[1px] rounded-[2px] border border-[#4d6a97] bg-[linear-gradient(90deg,#f4f7fb,#dde4ed_6px,#b9c8da_7px,#cfdae7)]">
      {[0, 1, 2, 3].map((i) => (
        <span key={i} className="h-px w-[7px] bg-[#7687a3]" />
      ))}
    </div>
    <div className="flex-1" />
    <button aria-label="Вниз" className="flex h-[18px] w-full items-center justify-center">
      <svg width="9" height="5" viewBox="0 0 9 5"><path d="M0 0h9L4.500 5z" fill="#31466f" /></svg>
    </button>
  </div>
);

const Splitter = () => (
  <div className="flex h-[15px] w-[7px] shrink-0 items-center justify-center border border-[#6a8fbd] bg-white">
    <span className="h-2 w-px bg-[#6a8fbd]" />
  </div>
);

const navPaths = ['M1 0h1v8H1zM7 0v8L3 4z', 'M6 0v8L2 4z', 'M2 0v8l4-4z', 'M7 0h1v8H7zM2 0v8l4-4z'];

const SheetTabs = () => (
  <div className="flex h-[17px] shrink-0 border-t border-b border-t-[#7da0cf] border-b-[#5a7fb0] bg-[#9db8dd]">
    <div className="flex w-[63px] shrink-0 items-center justify-around bg-[linear-gradient(#d9e7f8,#bcd3f0)]">
      {navPaths.map((d) => (
        <button key={d} aria-label="Прокрутка листов">
          <svg width="9" height="8" viewBox="0 0 9 8"><path d={d} fill="#1c3f80" /></svg>
        </button>
      ))}
    </div>
    <button className="h-[15px] w-[162px] shrink-0 bg-[linear-gradient(#ffffff,#e8f1fb)] pr-1 text-[12px] leading-[15px] font-bold whitespace-nowrap [clip-path:polygon(0_0,100%_0,152px_100%,0_100%)]">
      Список оборудования
    </button>
    <button aria-label="Вставить лист" className="-ml-2 h-[15px] w-[44px] shrink-0">
      <svg width="44" height="15" viewBox="0 0 44 15">
        <path d="M12 0h32L31 15H0z" fill="#cfe0f6" stroke="#7da0cf" />
        <path d="M17 4.500h9v7h-3l-1 2h-5z" fill="#f4f8fd" stroke="#5a6f92" />
        <path d="M15 1v7M12 4.500h7M13 2l5 5M18 2l-5 5" stroke="#f0a030" />
      </svg>
    </button>
    <div className="flex-1" />
    <div className="flex w-[650px] shrink-0 items-center bg-[#7896c3]">
      <Splitter />
      <button aria-label="Влево" className="flex w-[19px] justify-center">
        <svg width="5" height="9" viewBox="0 0 5 9"><path d="M5 0v9L0 4.500z" fill="#31466f" /></svg>
      </button>
      <div className="flex h-[14px] w-[534px] items-center justify-center gap-[1px] rounded-[2px] border border-[#4d6a97] bg-[linear-gradient(#f4f7fb,#dde4ed_6px,#b5c5d9_7px,#c9d6e5)]">
        {[0, 1, 2, 3].map((i) => (
          <span key={i} className="h-[7px] w-px bg-[#7687a3]" />
        ))}
      </div>
      <div className="flex-1" />
      <button aria-label="Вправо" className="mr-[7px]">
        <svg width="5" height="9" viewBox="0 0 5 9"><path d="M0 0v9l5-4.500z" fill="#31466f" /></svg>
      </button>
      <Splitter />
      <div className="h-full w-4 bg-[#7b9dd0]" />
    </div>
  </div>
);

const RoundButton = ({ plus }: { plus?: boolean }) => (
  <button aria-label={plus ? 'Увеличить масштаб' : 'Уменьшить масштаб'}>
    <svg width="17" height="17" viewBox="0 0 17 17">
      <circle cx="8.500" cy="8.500" r="7" fill="#e3edf9" stroke="#3f5f92" />
      <path d={plus ? 'M4.500 7.500h3v-3h2v3h3v2h-3v3h-2v-3h-3z' : 'M4.500 7.500h8v2h-8z'} fill="#465a7c" />
    </svg>
  </button>
);

const StatusBar = () => (
  <footer className="flex h-[21px] shrink-0 items-stretch bg-[linear-gradient(#dceafb,#c9def8_6px,#b3d0f5_7px,#d9e8fa)] text-[11px]">
    <p className="w-[53px] shrink-0 border-r border-[#8fb0dc] pl-[7px] leading-[20px]">Готово</p>
    <div className="flex-1 border-l border-white" />
    <div className="flex w-[247px] shrink-0 items-center border-l border-[#6a8fbd] bg-[linear-gradient(#b5cef0,#9dbce6_6px,#7fa3d6_7px,#86aadb)] pl-[6px] text-[#15305f]">
      <div className="flex h-[18px] overflow-hidden rounded-[2px] border border-[#5c80b5] bg-[#c5d9f2]">
        <button aria-label="Обычный" className="flex w-[18px] items-center justify-center bg-[linear-gradient(#fbc578,#fdc562_9px,#ffee9c)]">
          <svg width="13" height="11" viewBox="0 0 13 11" shapeRendering="crispEdges"><path d="M0.500 0.500h12v10h-12zM4.500 0v11M8.500 0v11M0 3.500h13M0 7.500h13" fill="#fff" stroke="#59616e" /></svg>
        </button>
        <button aria-label="Разметка страницы" className="flex w-[18px] items-center justify-center border-l border-[#9dbbe2]">
          <svg width="13" height="12" viewBox="0 0 13 12" shapeRendering="crispEdges"><path d="M0 0h13v12H0z" fill="#59616e" /><path d="M2 1h9v10H2z" fill="#c6ccd6" /><path d="M4 2h5v8H4z" fill="#fff" /><path d="M5 4.500h3M5 6.500h3" stroke="#59616e" /></svg>
        </button>
        <button aria-label="Страничный режим" className="flex w-[18px] items-center justify-center border-l border-[#9dbbe2]">
          <svg width="13" height="12" viewBox="0 0 13 12" shapeRendering="crispEdges"><path d="M0.500 0.500h12v11h-12z" fill="#c6ccd6" stroke="#59616e" /><path d="M1 1h4v6H1zM6 1h4v6H6z" fill="#fff" /><path d="M5.500 0v7.500M0 7.500h10.500V0" fill="none" stroke="#59616e" /></svg>
        </button>
      </div>
      <output className="w-[44px] text-center">100%</output>
      <RoundButton />
      <input
        type="range"
        aria-label="Масштаб"
        defaultValue={49}
        className="h-px w-[102px] appearance-none bg-[#dce9fb] shadow-[0_1px_0_#5c80b5] [&::-webkit-slider-thumb]:h-3 [&::-webkit-slider-thumb]:w-2 [&::-webkit-slider-thumb]:appearance-none [&::-webkit-slider-thumb]:rounded-b-full [&::-webkit-slider-thumb]:border [&::-webkit-slider-thumb]:border-[#3f5f92] [&::-webkit-slider-thumb]:bg-[#dfe9f6]"
      />
      <RoundButton plus />
    </div>
  </footer>
);

const App: React.FC = () => {
  return (
    <div className="relative flex h-screen flex-col overflow-hidden bg-white font-['Noto_Sans','Open_Sans',sans-serif] text-[#15428b]">
      <TitleBar />
      <TabBar />
      <button aria-label="Кнопка Office" className="absolute top-[2px] left-[1px]">
        <OfficeOrb />
      </button>
      <Ribbon />
      <FormulaBar />
      <main className="flex min-h-0 flex-1">
        <div className="min-w-0 flex-1 overflow-hidden">
          <Sheet />
        </div>
        <VerticalScroll />
      </main>
      <SheetTabs />
      <StatusBar />
    </div>
  );
};

export default App;
